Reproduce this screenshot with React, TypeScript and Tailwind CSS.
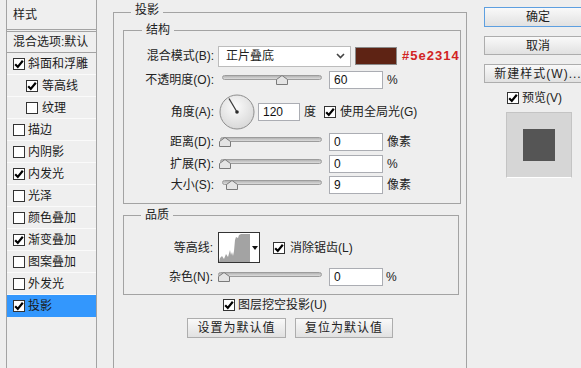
import React from 'react'

const Check = ({ on }: { on: boolean }) => (
  <span className="w-[12px] h-[12px] border border-[#333] bg-white flex items-center justify-center shrink-0">
    {on && (
      <svg width="10" height="10" viewBox="0 0 10 10">
        <path d="M1.2 5.2 L3.8 7.9 L8.8 1.8" stroke="#000" strokeWidth="2.2" fill="none" />
      </svg>
    )}
  </span>
)

const Slider = ({ thumb, width }: { thumb: string; width: string }) => (
  <div className={`relative h-[16px] shrink-0 ${width}`}>
    <div className="absolute left-0 right-0 top-[3px] h-[5px] rounded-full border border-[#9c9c9c] bg-gradient-to-b from-[#b4b4b4] to-[#dcdcdc]" />
    <svg className={`absolute top-[3px] ${thumb}`} width="12" height="10" viewBox="0 0 12 10">
      <path d="M6 0.5 L11.5 4.5 L11.5 9.5 L0.5 9.5 L0.5 4.5 Z" fill="#e4e4e4" stroke="#7a7a7a" />
    </svg>
  </div>
)

const NumBox = ({ value, width = 'w-[54px]' }: { value: string; width?: string }) => (
  <div className={`${width} h-[18px] shrink-0 border border-[#abadb3] bg-white pl-[4px] flex items-center text-[12px] text-[#111]`}>
    {value}
  </div>
)

const Label = ({ text, w = 'w-[90px]' }: { text: string; w?: string }) => (
  <span className={`${w} shrink-0 text-right text-[12px] text-[#222]`}>{text}</span>
)

const Button = ({ text, cls }: { text: string; cls: string }) => (
  <div className={`shrink-0 flex items-center justify-center border bg-gradient-to-b from-[#f9f9f9] to-[#e1e1e1] text-[12px] text-[#222] ${cls}`}>
    {text}
  </div>
)

const styleRows = [
  { name: '斜面和浮雕', on: true, sub: false },
  { name: '等高线', on: true, sub: true },
  { name: '纹理', on: false, sub: true },
  { name: '描边', on: false, sub: false },
  { name: '内阴影', on: false, sub: false },
  { name: '内发光', on: true, sub: false },
  { name: '光泽', on: false, sub: false },
  { name: '颜色叠加', on: false, sub: false },
  { name: '渐变叠加', on: true, sub: false },
  { name: '图案叠加', on: false, sub: false },
  { name: '外发光', on: false, sub: false },
  { name: '投影', on: true, sub: false },
]

export default function App() {
  return (
    <div className="w-[581px] h-[368px] overflow-hidden bg-[#eeeeee] flex font-['Liberation_Sans','Noto_Sans_CJK_SC',sans-serif] text-[12px] text-[#222]">
      {/* 样式列表 */}
      <div className="ml-[6px] w-[91px] shrink-0 h-full border-x border-[#a3a3a3] bg-[#efefef] flex flex-col">
        <div className="h-[29px] pl-[6px] flex items-center">样式</div>
        <div className="h-[3px] border-y border-[#a3a3a3]" />
        <div className="h-[21px] pl-[6px] flex items-center border-b border-[#a3a3a3] whitespace-nowrap">混合选项:默认</div>
        {styleRows.map((r, i) => {
          const selected = i === styleRows.length - 1
          return (
            <div
              key={r.name}
              className={`h-[22px] flex items-center border-b ${selected ? 'bg-[#3397fd] border-[#3397fd]' : 'border-[#fafafa]'} ${r.sub ? 'pl-[19px] gap-[4px]' : 'pl-[6px] gap-[3px]'}`}
            >
              <Check on={r.on} />
              <span className="text-[#1a1a1a]">{r.name}</span>
            </div>
          )
        })}
      </div>

      {/* 投影设置 */}
      <div className="ml-[16px] w-[354px] shrink-0">
        <fieldset className="mt-[3px] h-[380px] border border-[#a3a3a3]">
          <legend className="ml-[17px] px-[4px] leading-[14px] pb-[4px]">投影</legend>

          <fieldset className="ml-[9px] w-[335px] border border-[#a3a3a3] pb-[7px]">
            <legend className="ml-[18px] px-[4px] leading-[18px]">结构</legend>

            <div className="mt-[6px] h-[22px] flex items-center">
              <Label text="混合模式(B):" />
              <div className="ml-[4px] w-[133px] h-[21px] border border-[#bcbcbc] bg-white flex items-center justify-between pl-[7px] pr-[5px]">
                <span>正片叠底</span>
                <svg width="9" height="6" viewBox="0 0 9 6">
                  <path d="M1 1 L4.5 4.5 L8 1" stroke="#444" strokeWidth="1.6" fill="none" />
                </svg>
              </div>
              <div className="ml-[4px] w-[42px] h-[18px] border border-[#8a8a8a] bg-[#5e2314]" />
              <span className="ml-[5px] text-[13px] font-bold tracking-[1px] text-[#d22323] whitespace-nowrap">#5e2314</span>
            </div>

            <div className="h-[26px] flex items-center">
              <Label text="不透明度(O):" />
              <div className="ml-[8px]">
                <Slider width="w-[100px]" thumb="left-[54px]" />
              </div>
              <div className="ml-[7px]">
                <NumBox value="60" />
              </div>
              <span className="ml-[4px]">%</span>
            </div>

            <div className="h-[37px] flex items-center">
              <Label text="角度(A):" />
              <svg className="ml-[5px] shrink-0" width="36" height="36" viewBox="0 0 36 36">
                <defs>
                  <radialGradient id="dialFill" cx="0.45" cy="0.35" r="0.7">
                    <stop offset="0" stopColor="#fbfbfb" />
                    <stop offset="1" stopColor="#d6d6d6" />
                  </radialGradient>
                </defs>
                <circle cx="18" cy="18" r="17" fill="url(#dialFill)" stroke="#8e8e8e" />
                <line x1="18" y1="18" x2="10" y2="4.5" stroke="#3a3a3a" strokeWidth="1.3" />
                <circle cx="18" cy="18" r="1.8" fill="#2a2a2a" />
              </svg>
              <div className="ml-[3px]">
                <NumBox value="120" width="w-[42px]" />
              </div>
              <span className="ml-[4px]">度</span>
              <span className="ml-[8px]">
                <Check on={true} />
              </span>
              <span className="ml-[4px] whitespace-nowrap">使用全局光(G)</span>
            </div>

            <div className="h-[23px] flex items-center">
              <Label text="距离(D):" />
              <div className="ml-[6px]">
                <Slider width="w-[102px]" thumb="left-[-1px]" />
              </div>
              <div className="ml-[7px]">
                <NumBox value="0" />
              </div>
              <span className="ml-[4px]">像素</span>
            </div>

            <div className="h-[21px] flex items-center">
              <Label text="扩展(R):" />
              <div className="ml-[6px]">
                <Slider width="w-[102px]" thumb="left-[-1px]" />
              </div>
              <div className="ml-[7px]">
                <NumBox value="0" />
              </div>
              <span className="ml-[4px]">%</span>
            </div>

            <div className="h-[22px] flex items-center">
              <Label text="大小(S):" />
              <div className="ml-[8px]">
                <Slider width="w-[100px]" thumb="left-[4px]" />
              </div>
              <div className="ml-[7px]">
                <NumBox value="9" />
              </div>
              <span className="ml-[4px]">像素</span>
            </div>
          </fieldset>

          <fieldset className="mt-[1px] ml-[9px] w-[336px] border border-[#a3a3a3] pb-[8px]">
            <legend className="ml-[17px] px-[4px] leading-[20px]">品质</legend>

            <div className="mt-[7px] h-[31px] flex items-center">
              <Label text="等高线:" w="w-[89px]" />
              <div className="ml-[5px] w-[42px] h-[31px] border border-[#333] bg-white flex shrink-0">
                <svg width="31" height="29" viewBox="0 0 31 29">
                  <polygon
                    points="0,29 1,25 3,23 5,26 7,21 9,24 11,17 12,22 13,19 14,23 15,18 16,7 17,4 19,5 20,2 22,1 31,1 31,29"
                    fill="#a3a3a3"
                  />
                </svg>
                <div className="flex-1 flex items-center justify-center">
                  <svg width="6" height="4" viewBox="0 0 6 4">
                    <path d="M0 0 L6 0 L3 4 Z" fill="#111" />
                  </svg>
                </div>
              </div>
              <span className="ml-[13px]">
                <Check on={true} />
              </span>
              <span className="ml-[5px] whitespace-nowrap">消除锯齿(L)</span>
            </div>

            <div className="mt-[5px] h-[18px] flex items-center">
              <Label text="杂色(N):" w="w-[89px]" />
              <div className="ml-[5px]">
                <Slider width="w-[104px]" thumb="left-[0px]" />
              </div>
              <div className="ml-[7px]">
                <NumBox value="0" />
              </div>
              <span className="ml-[3px]">%</span>
            </div>
          </fieldset>

          <div className="h-[20px] pl-[109px] flex items-center gap-[3px]">
            <Check on={true} />
            <span className="whitespace-nowrap">图层挖空投影(U)</span>
          </div>

          <div className="mt-[3px] pl-[73px] flex gap-[9px]">
            <Button text="设置为默认值" cls="w-[99px] h-[20px] border-[#adadad] tracking-[1px]" />
            <Button text="复位为默认值" cls="w-[98px] h-[20px] border-[#adadad] tracking-[1px]" />
          </div>
        </fieldset>
      </div>

      {/* 按钮和预览 */}
      <div className="ml-[17px] shrink-0 flex flex-col">
        <Button text="确定" cls="mt-[7px] w-[108px] h-[20px] border-[#5d9fe0]" />
        <Button text="取消" cls="mt-[9px] w-[108px] h-[19px] border-[#adadad]" />
        <Button text="新建样式(W)..." cls="mt-[9px] w-[108px] h-[19px] border-[#adadad] tracking-[1px] whitespace-nowrap" />
        <div className="mt-[5px] h-[20px] pl-[23px] flex items-center gap-[3px]">
          <Check on={true} />
          <span className="whitespace-nowrap">预览(V)</span>
        </div>
        <div className="mt-[4px] ml-[22px] w-[66px] h-[66px] border border-[#c4c4c4] border-b-white bg-[#d6d6d6] flex items-center justify-center">
          <div className="w-[32px] h-[32px] bg-[#555555]" />
        </div>
      </div>
    </div>
  )
}
